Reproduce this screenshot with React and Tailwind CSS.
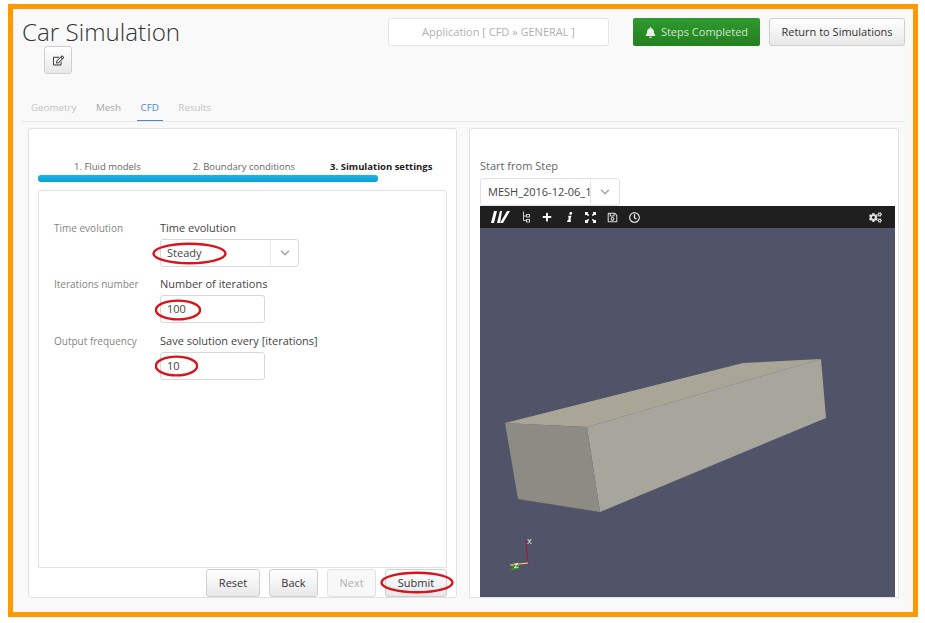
import { FaBell, FaChevronDown, FaCogs, FaInfo, FaPlus, FaRegClock, FaRegEdit, FaRegSave } from 'react-icons/fa';

function Ellipse({ className }) {
  return (
    <svg className={`absolute ${className}`} viewBox="0 0 100 40" preserveAspectRatio="none">
      <ellipse cx="50" cy="20" rx="48" ry="17" fill="none" stroke="#d9141c" strokeWidth="2.4" vectorEffect="non-scaling-stroke" />
    </svg>
  );
}

function Tab({ children, active, dim }) {
  return (
    <div className={`h-[28px] px-1 pt-[8px] border-b ${active ? 'text-[#4a8cc7] border-[#4a8cc7]' : dim ? 'text-[#c4c4c4] border-transparent' : 'text-[#a8a8a8] border-transparent'}`}>
      {children}
    </div>
  );
}

function Field({ side, label, children }) {
  return (
    <div className="flex">
      <div className="w-[106px] pt-[6px] text-[10px] text-[#858585]">{side}</div>
      <div>
        <div className="h-[24px] pt-[5px] text-[#444]">{label}</div>
        {children}
      </div>
    </div>
  );
}

function NumberBox({ value, ring, className = '' }) {
  return (
    <div className={`relative w-[105px] h-[28px] bg-white border border-[#d8d8d8] rounded-[3px] pl-[6px] leading-[26px] text-[#444] ${className}`}>
      {value}
      <Ellipse className={ring} />
    </div>
  );
}

function Btn({ children, disabled, className = '' }) {
  return (
    <div className={`h-[28px] flex items-center justify-center rounded-[3px] border ${disabled ? 'border-[#e2e2e2] bg-[#f8f8f8] text-[#b0b0b0]' : 'border-[#cfcfcf] bg-gradient-to-b from-white to-[#e8e8e8] text-[#333]'} ${className}`}>
      {children}
    </div>
  );
}

function Model() {
  return (
    <svg className="flex-1 w-full min-h-0" viewBox="0 0 415 369" preserveAspectRatio="none">
      <rect width="415" height="369" fill="#515469" />
      <polygon points="25,195 263,135 341,131 107,199" fill="#a9a698" />
      <polygon points="107,199 341,131 346,190 120,284" fill="#a7a69d" />
      <polygon points="25,195 107,199 120,284 38,271" fill="#8c8b84" />
      <polyline points="46,312 48,335 32,337" fill="none" stroke="#a11d35" strokeWidth="1.2" />
      <line x1="48" y1="335" x2="30" y2="337" stroke="#e8e87a" strokeWidth="1" />
      <polygon points="30,342 40,336 38,341" fill="#27b327" />
      <circle cx="33" cy="337" r="1.5" fill="#b79a2a" />
      <text x="47" y="316" fontSize="7" fill="#fff" fontFamily="Liberation Sans, sans-serif">X</text>
      <text x="34" y="340" fontSize="7" fill="#fff" fontFamily="Liberation Sans, sans-serif">Z</text>
    </svg>
  );
}

export default function App() {
  return (
    <div className="w-[925px] h-[623px] bg-white pl-[8px] pr-[7px] pt-[4px] pb-[6px] text-[11px] font-['Open_Sans',sans-serif]">
      <div className="h-full border-[5px] border-[#ff9900] bg-[#f9f9f9] pl-[9px] pr-[8px] pt-[5px] pb-[14px] flex flex-col">
        {/* HEADER */}
        <div className="flex items-start justify-between h-[78px] shrink-0">
          <div>
            <h1 className="text-[24.2px] leading-[36px] font-light text-[#333]">Car Simulation</h1>
            <div className="ml-[22px] mt-[-4px] w-[28px] h-[28px] rounded-[3px] border border-[#cfcfcf] bg-gradient-to-b from-white to-[#e8e8e8] flex items-center justify-center">
              <FaRegEdit size={11} className="text-[#333]" />
            </div>
          </div>
          <div className="flex mt-[4px]">
            <div className="w-[221px] h-[28px] mr-[24px] bg-white border border-[#e6e6e6] rounded-[3px] flex items-center justify-center text-[#b0b0b0]">
              Application [ CFD » GENERAL ]
            </div>
            <div className="w-[127px] h-[28px] mr-[9px] rounded-[2px] bg-gradient-to-b from-[#2f9a2f] to-[#24801f] text-[#cfe6cf] flex items-center justify-center gap-[5px]">
              <FaBell size={11} className="text-[#e8f2e8]" />
              Steps Completed
            </div>
            <Btn className="w-[136px]">Return to Simulations</Btn>
          </div>
        </div>

        {/* TABS */}
        <div className="flex gap-[11.5px] border-b border-[#e8e8e8] pl-[5px] h-[30px] shrink-0 pt-[1px] text-[9.8px]">
          <Tab dim>Geometry</Tab>
          <Tab>Mesh</Tab>
          <Tab active>CFD</Tab>
          <Tab dim>Results</Tab>
        </div>

        <div className="flex gap-[12px] pl-[6px] pr-[6px] pt-[6px] flex-1 min-h-0">
          {/* LEFT PANEL */}
          <div className="w-[429px] bg-white border border-[#e2e2e2] rounded-[3px] px-[9px] pt-[31px] flex flex-col">
            <div className="flex text-[9.5px] h-[15px] text-[#666]">
              <span className="ml-[36px]">1. Fluid models</span>
              <span className="ml-[52px]">2. Boundary conditions</span>
              <span className="ml-[35px] font-bold text-[#222]">3. Simulation settings</span>
            </div>
            <div className="w-[340px] h-[7px] rounded-[3px] bg-gradient-to-b from-[#1fb5e8] to-[#0a9fd0]" />
            <div className="flex-1 mt-[8px] border border-[#e2e2e2] rounded-t-[3px] px-[15px] pt-[24px]">
              <Field side="Time evolution" label="Time evolution">
                <div className="relative w-[139px] h-[28px] mb-[4px] bg-white border border-[#d8d8d8] rounded-[3px] flex text-[#444]">
                  <div className="flex-1 pl-[6px] leading-[26px]">Steady</div>
                  <div className="w-[28px] border-l border-[#e8e8e8] flex items-center justify-center text-[#aaa]">
                    <FaChevronDown size={10} />
                  </div>
                  <Ellipse className="left-[-9px] top-[2px] w-[75px] h-[23px]" />
                </div>
              </Field>
              <Field side="Iterations number" label="Number of iterations">
                <NumberBox value="100" className="mb-[5px]" ring="left-[-6px] top-[3px] w-[46px] h-[22px]" />
              </Field>
              <Field side="Output frequency" label="Save solution every [iterations]">
                <NumberBox value="10" ring="left-[-6px] top-[2px] w-[43px] h-[22px]" />
              </Field>
            </div>
            <div className="flex justify-end items-end gap-[9px] h-[29px] shrink-0">
              <Btn className="w-[54px]">Reset</Btn>
              <Btn className="w-[49px]">Back</Btn>
              <Btn disabled className="w-[49px]">Next</Btn>
              <Btn className="relative w-[62px]">
                Submit
                <Ellipse className="left-[-6px] top-[1px] w-[74px] h-[23px]" />
              </Btn>
            </div>
          </div>

          {/* RIGHT PANEL */}
          <div className="flex-1 min-h-0 bg-white border border-[#e2e2e2] rounded-t-[3px] pl-[10px] pr-[3px] pt-[29px] flex flex-col">
            <div className="h-[20px] shrink-0 text-[#666]">Start from Step</div>
            <div className="w-[140px] h-[28px] shrink-0 bg-white border border-[#e2e2e2] rounded-[3px] flex text-[#444]">
              <div className="flex-1 pl-[7px] leading-[26px] overflow-hidden whitespace-nowrap">MESH_2016-12-06_14</div>
              <div className="w-[29px] shrink-0 border-l border-[#e8e8e8] flex items-center justify-center text-[#aaa]">
                <FaChevronDown size={10} />
              </div>
            </div>
            <div className="h-[22px] shrink-0 bg-[#1f1f1f] flex items-center pl-[11px] pr-[12px] text-white">
              <svg width="19" height="14" viewBox="0 0 19 14" fill="#fff">
                <polygon points="3,1 6,1 3,13 0,13" />
                <polygon points="9,1 11,1 9,13 6,13" />
                <polygon points="16,1 19,1 12,13 9,13" />
              </svg>
              <svg className="ml-[12px]" width="8" height="12" viewBox="0 0 8 12" fill="none" stroke="#ccc" strokeWidth="1">
                <path d="M1.5 0.5v9h3M1.5 5h3" />
                <rect x="4.5" y="3.5" width="3" height="2.5" />
                <rect x="4.5" y="8.5" width="3" height="2.5" />
              </svg>
              <FaPlus size={10} className="ml-[12px]" />
              <FaInfo size={10} className="ml-[13px] -skew-x-12" />
              <svg className="ml-[10px]" width="11" height="11" viewBox="0 0 11 11" fill="none" stroke="#fff" strokeWidth="1.6">
                <path d="M0.5 3V0.5H3M0.8 0.8L3.6 3.6" />
                <path d="M10.5 3V0.5H8M10.2 0.8L7.4 3.6" />
                <path d="M0.5 8V10.5H3M0.8 10.2L3.6 7.4" />
                <path d="M10.5 8V10.5H8M10.2 10.2L7.4 7.4" />
              </svg>
              <FaRegSave size={11} className="ml-[11px] text-[#ddd]" />
              <FaRegClock size={11} className="ml-[11px]" />
              <FaCogs size={13} className="ml-auto mr-[1px] text-[#ddd]" />
            </div>
            <Model />
          </div>
        </div>
      </div>
    </div>
  );
}
